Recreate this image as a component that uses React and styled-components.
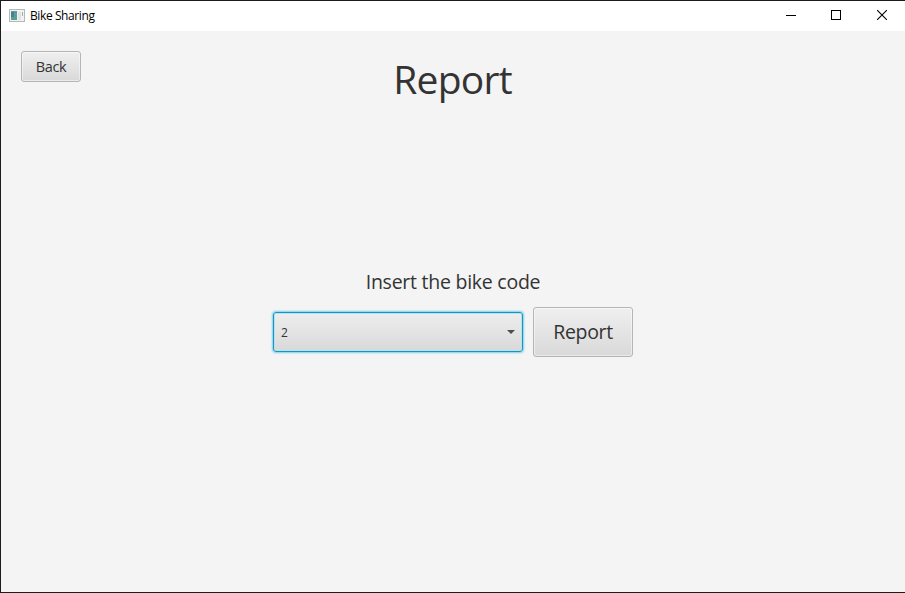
import React from "react";
import styled, { createGlobalStyle } from "styled-components";

const GlobalStyle = createGlobalStyle`
  * { box-sizing: border-box; }
  body { margin: 0; overflow: hidden; }
`;

const Window = styled.div`
  width: 905px;
  height: 593px;
  display: flex;
  flex-direction: column;
  background: #f4f4f4;
  border: solid #1c1c1e;
  border-width: 1px 0 1px 1px;
  font-family: "Open Sans", "Noto Sans", sans-serif;
  color: #333;
`;

const TitleBar = styled.header`
  height: 30px;
  flex: none;
  display: flex;
  align-items: center;
  padding-left: 8px;
  background: #fff;
  color: #000;
`;

const WindowTitle = styled.span`
  flex: 1;
  margin-left: 5px;
  font-size: 12px;
  line-height: 16px;
  letter-spacing: -0.4px;
`;

const Caption = styled.div`
  width: 46px;
  display: flex;
  justify-content: center;
  padding-bottom: 2px;
  padding-left: ${(p) => (p.$nudge ? 2 : 0)}px;
`;

const Content = styled.main`
  flex: 1;
  display: flex;
  flex-direction: column;
  align-items: center;
`;

const Header = styled.div`
  width: 100%;
  height: 82px;
  display: grid;
  grid-template-columns: 60px 1fr 60px;
  padding: 20px 20px 0;
`;

const Heading = styled.h1`
  margin: 0;
  padding-right: 1px;
  text-align: center;
  font-size: 39px;
  font-weight: 400;
  line-height: 56px;
  letter-spacing: -0.75px;
`;

const Button = styled.button`
  width: ${(p) => (p.$large ? 100 : 60)}px;
  height: ${(p) => (p.$large ? 50 : 31)}px;
  padding: 0 0 ${(p) => (p.$large ? 2 : 0)}px;
  border: 1px solid #b5b5b5;
  border-radius: 3px;
  background: linear-gradient(#efefef, #d9d9d9);
  box-shadow: inset 0 0 0 1px rgba(255, 255, 255, 0.45);
  color: #333;
  font-family: inherit;
  font-size: ${(p) => (p.$large ? 19.5 : 14.5)}px;
  letter-spacing: -0.35px;
`;

const Form = styled.section`
  margin-top: 155px;
  display: flex;
  flex-direction: column;
  align-items: center;
`;

const Label = styled.label`
  font-size: 19.5px;
  line-height: 28px;
  letter-spacing: -0.25px;
`;

const Controls = styled.div`
  margin-top: 11px;
  display: flex;
  align-items: center;
  gap: 10px;
`;

const ComboBox = styled.div`
  width: 250px;
  height: 40px;
  display: flex;
  align-items: center;
  justify-content: space-between;
  padding: 0 7px;
  border: 1px solid #1a93bd;
  border-radius: 3px;
  background: linear-gradient(#eeeeee, #d9d9d9);
  box-shadow: 0 0 2px 1px #7fd0ec, inset 0 0 0 1px #b5e3f2;
  font-size: 12px;
`;

export default function App() {
  return (
    <>
      <GlobalStyle />
      <Window>
        <TitleBar>
          <svg width="16" height="14" viewBox="0 0 16 14">
            <rect x="0.5" y="0.5" width="15" height="12" fill="#f1f3f3" stroke="#b3b8b8" />
            <rect x="2" y="2" width="6" height="9" fill="#5a9c96" />
            <rect x="2" y="3" width="3" height="5" fill="#4b7d9b" />
            <rect x="9" y="3" width="3" height="8" fill="#dfe3e3" />
            <rect x="13" y="3" width="1" height="4" fill="#9ab5a2" />
          </svg>
          <WindowTitle>Bike Sharing</WindowTitle>
          <Caption $nudge>
            <svg width="10" height="10"><path d="M0 5.5H10" stroke="#000" /></svg>
          </Caption>
          <Caption>
            <svg width="10" height="10"><rect x="0.5" y="0.5" width="9" height="9" fill="none" stroke="#000" /></svg>
          </Caption>
          <Caption>
            <svg width="10" height="10"><path d="M0 0L10 10M10 0L0 10" stroke="#000" strokeWidth="1.1" /></svg>
          </Caption>
        </TitleBar>
        <Content>
          <Header>
            <Button>Back</Button>
            <Heading>Report</Heading>
          </Header>
          <Form>
            <Label>Insert the bike code</Label>
            <Controls>
              <ComboBox>
                <span>2</span>
                <svg width="8" height="4"><path d="M0 0H8L4 4Z" fill="#4d4d4d" /></svg>
              </ComboBox>
              <Button $large>Report</Button>
            </Controls>
          </Form>
        </Content>
      </Window>
    </>
  );
}
